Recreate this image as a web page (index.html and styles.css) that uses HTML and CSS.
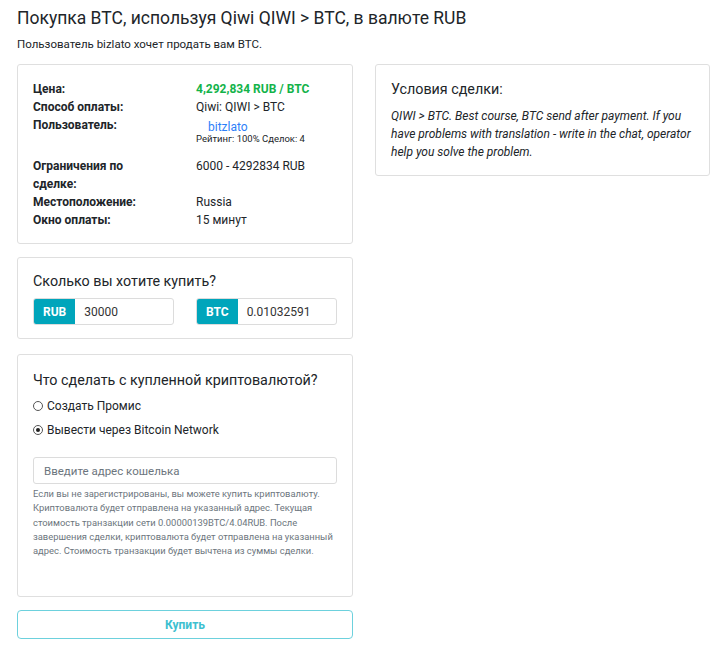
FILE: index.html
```html
<!DOCTYPE html>
<html lang="ru">
<head>
<meta charset="utf-8">
<title>Покупка BTC</title>
<link rel="stylesheet" href="styles.css">
</head>
<body>
<div class="page">
  <h1 class="title">Покупка BTC, используя Qiwi QIWI &gt; BTC, в валюте RUB</h1>
  <p class="subtitle">Пользователь bizlato хочет продать вам BTC.</p>
  <div class="layout">
    <div class="col">
      <div class="card info">
        <div class="row"><div class="label">Цена:</div><div class="value price">4,292,834 RUB / BTC</div></div>
        <div class="row"><div class="label">Способ оплаты:</div><div class="value">Qiwi: QIWI &gt; BTC</div></div>
        <div class="row user"><div class="label">Пользователь:</div><div class="value"><a class="ulink" href="#">bitzlato</a><div class="rating">Рейтинг: 100% Сделок: 4</div></div></div>
        <div class="row"><div class="label">Ограничения по сделке:</div><div class="value">6000 - 4292834 RUB</div></div>
        <div class="row"><div class="label">Местоположение:</div><div class="value">Russia</div></div>
        <div class="row"><div class="label">Окно оплаты:</div><div class="value">15 минут</div></div>
      </div>
      <div class="card amount">
        <h2 class="card-title">Сколько вы хотите купить?</h2>
        <div class="inputs">
          <div class="igroup"><span class="addon">RUB</span><span class="field">30000</span></div>
          <div class="igroup"><span class="addon">BTC</span><span class="field">0.01032591</span></div>
        </div>
      </div>
      <div class="card what">
        <h2 class="card-title">Что сделать с купленной криптовалютой?</h2>
        <label class="radio"><span class="rb"></span>Создать Промис</label>
        <label class="radio"><span class="rb checked"></span>Вывести через Bitcoin Network</label>
        <div class="address">Введите адрес кошелька</div>
        <p class="help">Если вы не зарегистрированы, вы можете купить криптовалюту.<br>Криптовалюта будет отправлена на указанный адрес. Текущая<br>стоимость транзакции сети 0.00000139BTC/4.04RUB. После<br>завершения сделки, криптовалюта будет отправлена на указанный<br>адрес. Стоимость транзакции будет вычтена из суммы сделки.</p>
      </div>
      <button class="buy">Купить</button>
    </div>
    <div class="col">
      <div class="card terms">
        <h2 class="card-title">Условия сделки:</h2>
        <p class="terms-text">QIWI &gt; BTC. Best course, BTC send after payment. If you have problems with translation - write in the chat, operator help you solve the problem.</p>
      </div>
    </div>
  </div>
</div>
</body>
</html>
```
FILE: styles.css
```css
* { box-sizing: border-box; }
body {
  margin: 0;
  font-family: Roboto, "Noto Sans", sans-serif;
  color: #212529;
  background: #fff;
  font-size: 12px;
}
.page { padding: 6px 19px 0 17px; }
.title {
  font-size: 17.5px;
  font-weight: 400;
  margin: 0 0 6px 0;
  line-height: 24px;
}
.subtitle { margin: 0 0 12px 0; font-size: 11.5px; line-height: 16px; }
.layout {
  display: grid;
  grid-template-columns: 336px 335px;
  column-gap: 22px;
  align-items: start;
}
.col { display: flex; flex-direction: column; }
.card {
  border: 1px solid #dfdfdf;
  border-radius: 3px;
  background: #fff;
}
.info { padding: 15px 15px 14px 15px; }
.row { display: flex; line-height: 18px; }
.label { width: 163px; flex: none; font-weight: 700; padding-right: 40px; }
.value { flex: 1; }
.price { color: #13b34a; font-weight: 700; }
.user { padding-bottom: 13px; }
.ulink { color: #2d7ff9; text-decoration: none; display: block; padding-left: 12px; margin-top: 6px; line-height: 11px; }
.rating { font-size: 9.5px; line-height: 11px; }
.card-title { font-size: 14.3px; font-weight: 400; margin: 0; line-height: 22px; }
.amount { margin-top: 13px; padding: 12px 15px 13px 15px; }
.inputs { display: flex; gap: 22px; margin-top: 6px; }
.igroup { display: flex; flex: 1; height: 27px; border: 1px solid #dcdcdc; border-radius: 3px; overflow: hidden; }
.addon { background: #00a5bb; color: #fff; font-weight: 700; display: flex; align-items: center; padding: 0 9px; }
.field { display: flex; align-items: center; padding-left: 9px; color: #333; }
.what { margin-top: 15px; padding: 14px 15px 38px 15px; }
.what .card-title { margin-bottom: 3px; }
.radio { display: flex; align-items: center; line-height: 24px; gap: 4px; }
.rb { width: 10px; height: 10px; border: 1px solid #555; border-radius: 50%; display: inline-block; position: relative; }
.rb.checked::after { content: ""; position: absolute; left: 2px; top: 2px; width: 4px; height: 4px; border-radius: 50%; background: #222; }
.address { margin-top: 15px; height: 27px; border: 1px solid #dcdcdc; border-radius: 3px; display: flex; align-items: center; padding-left: 10px; color: #6c757d; font-size: 11.5px; }
.help { font-size: 9.4px; line-height: 14.3px; color: #6c757d; margin: 3px 0 0 0; white-space: nowrap; }
.terms { padding: 13px 15px 14px 15px; }
.terms-text { font-style: italic; margin: 7px 0 0 0; line-height: 18px; }
.buy {
  margin-top: 13px;
  height: 29px;
  border: 1px solid #6dd1dd;
  border-radius: 4px;
  background: #fff;
  color: #3ec0d0;
  font-weight: 700;
  font-family: inherit;
  font-size: 12px;
}
```
